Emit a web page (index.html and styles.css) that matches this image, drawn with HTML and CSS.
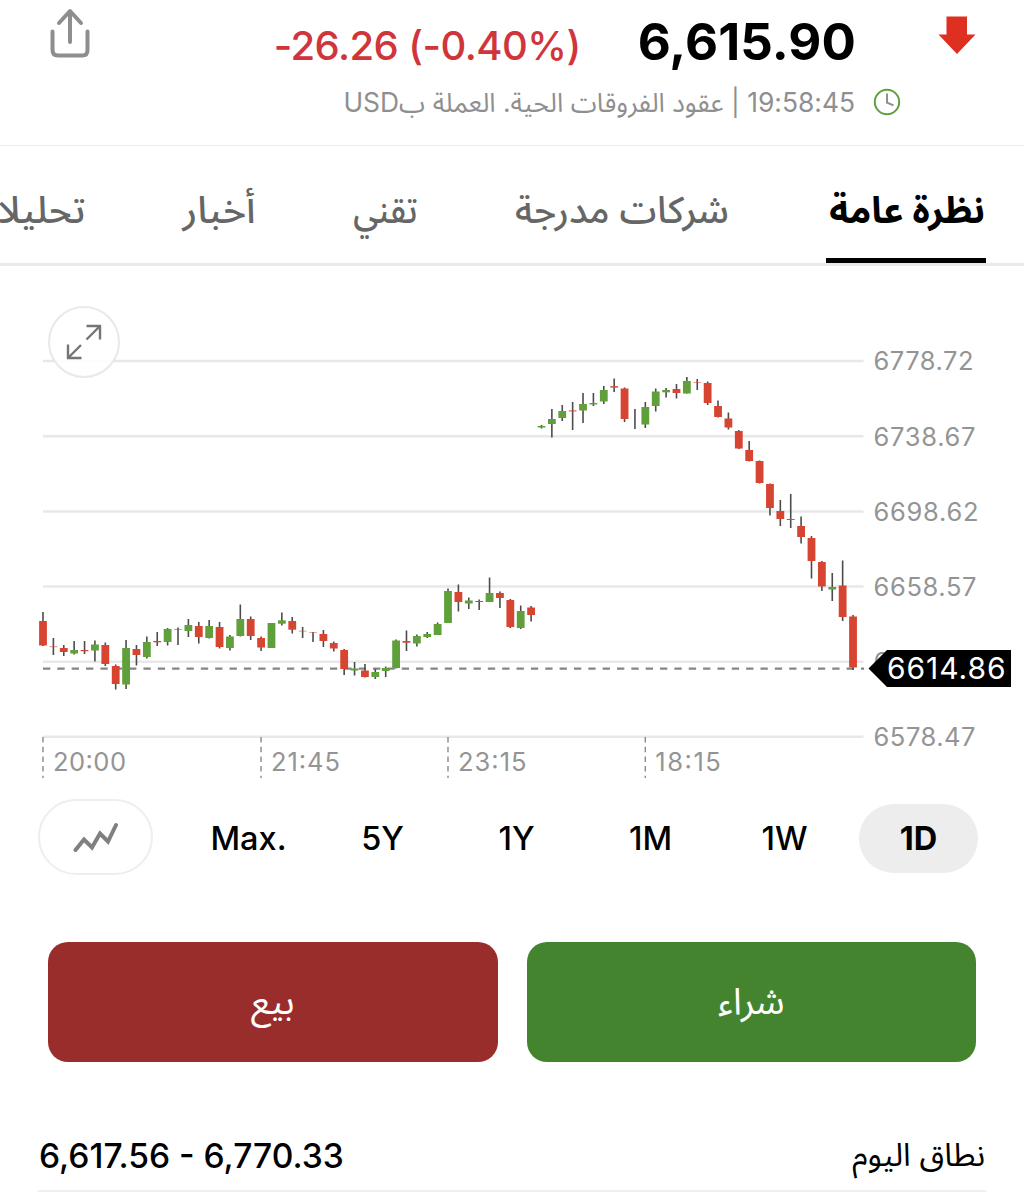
FILE: index.html
```html
<!DOCTYPE html>
<html lang="ar" dir="rtl">
<head>
<meta charset="utf-8">
<title>6,615.90</title>
<link rel="stylesheet" href="styles.css">
</head>
<body>
<header class="quote">
  <svg class="quote-arrow" width="38" height="40" viewBox="0 0 38 40"><path d="M8.500 0.500H29V18.500H37.500L19 38L0.500 18.500H8.500Z" fill="#de2f20"/></svg>
  <div class="quote-body">
    <div class="quote-line">
      <span class="price" dir="ltr">6,615.90</span>
      <span class="change" dir="ltr">-26.26 (-0.40%)</span>
    </div>
    <div class="quote-meta">
      <svg class="clock" width="28" height="28" viewBox="0 0 28 28" fill="none"><circle cx="14" cy="14" r="12.200" stroke="#5f9f3f" stroke-width="2"/><path d="M14 5.500V14.500L20.500 17.300" stroke="#8c8c8c" stroke-width="1.900"/></svg>
      <span class="meta-text"><span class="meta-time">19:58:45</span> | عقود الفروقات الحية. العملة بUSD</span>
    </div>
  </div>
  <svg class="share" width="44" height="54" viewBox="0 0 44 54" fill="none" stroke="#8e8e8e" stroke-width="4" stroke-linecap="round" stroke-linejoin="round"><path d="M22 37V7M11 18L22 6L33 18M4.500 26.500V45Q4.500 50.500 10 50.500H34.500Q39.500 50.500 39.500 45V26.500"/></svg>
</header>
<nav class="tabs">
  <a class="tab tab-active"><span>نظرة عامة</span></a>
  <a class="tab tab-companies"><span>شركات مدرجة</span></a>
  <a class="tab tab-tech"><span>تقني</span></a>
  <a class="tab tab-news"><span>أخبار</span></a>
  <a class="tab tab-analysis"><span>تحليلات</span></a>
</nav>
<section class="chart">
  <svg id="chart" class="chart-canvas" width="1024" height="524" viewBox="0 266 1024 524" direction="ltr"></svg>
  <button class="expand" aria-label="تكبير"><svg width="36" height="36" viewBox="0 0 36 36" fill="none" stroke="#757575" stroke-width="2.400"><path d="M20.500 2H34V15.500M33.500 2.500L20.500 15.500M2 20.500V34H15.500M2.500 33.500L15 21"/></svg></button>
</section>
<div class="ranges">
  <span class="range range-active">1D</span>
  <span class="range">1W</span>
  <span class="range">1M</span>
  <span class="range">1Y</span>
  <span class="range">5Y</span>
  <span class="range range-max" dir="ltr">Max.</span>
  <button class="chart-type" aria-label="نوع الرسم"><svg width="46" height="32" viewBox="0 0 46 32" fill="none" stroke="#808080" stroke-width="4" stroke-linecap="round"><path d="M2.500 29L11 18.500L19 26.500L27 12.500L35 20.500L43 4"/></svg></button>
</div>
<div class="actions">
  <button class="trade buy"><span>شراء</span></button>
  <button class="trade sell"><span>بيع</span></button>
</div>
<dl class="stat">
  <dt>نطاق اليوم</dt>
  <dd dir="ltr">6,617.56 - 6,770.33</dd>
</dl>
<script src="chart.js"></script>
</body>
</html>
```
FILE: styles.css
```css
* { box-sizing: border-box; }
html, body { margin: 0; }
body {
  width: 1024px;
  height: 1200px;
  overflow: hidden;
  background: #fff;
  color: #000;
  font-family: Inter, "Noto Sans Arabic", "Noto Sans", "DejaVu Sans", sans-serif;
}
svg { display: block; }
button { border: 0; padding: 0; font: inherit; background: none; }

.quote {
  height: 146px;
  display: flex;
  align-items: flex-start;
  padding: 0 48px;
  border-bottom: 1px solid #ebebeb;
}
.quote-arrow { margin-top: 16px; }
.quote-body { width: 631px; margin-right: 37px; }
.quote-line {
  height: 84px;
  display: flex;
  align-items: baseline;
  gap: 57px;
  padding: 11px 45px 0 0;
}
.price { font-size: 51px; line-height: 62px; font-weight: 700; letter-spacing: 0.1px; }
.change { font-size: 40px; font-weight: 500; color: #d0353b; letter-spacing: -0.55px; white-space: nowrap; }
.quote-meta { display: flex; align-items: center; gap: 18px; height: 36px; }
.meta-text { font-size: 26.400px; line-height: 36px; color: #8f8f8f; white-space: nowrap; }
.meta-time { letter-spacing: 0.6px; }
.share { margin-top: 5px; margin-right: auto; }

.tabs {
  height: 120px;
  display: flex;
  gap: 97px;
  padding-right: 38px;
  border-bottom: 3px solid #e9e9e9;
  overflow: hidden;
}
.tab {
  flex: none;
  height: 117px;
  padding-top: 36px;
  font-size: 37px;
  line-height: 56px;
  font-weight: 500;
  color: #666;
  white-space: nowrap;
}
.tab span { display: inline-block; transform-origin: right; }
.tab-active { width: 160px; padding-right: 1px; color: #000; font-weight: 700; border-bottom: 5px solid #000; }
.tab-companies { width: 215px; }
.tab-companies span { transform: scaleX(1.01); }
.tab-tech { width: 64px; }
.tab-tech span { transform: scaleX(.9); }
.tab-news { width: 74px; }
.tab-news span { transform: scaleX(1.05); }
.tab-analysis span { transform: scaleX(1.04); }

.chart { position: relative; height: 524px; }
.expand {
  position: absolute;
  left: 48px;
  top: 40px;
  width: 72px;
  height: 72px;
  display: grid;
  place-items: center;
  border: 2px solid #e9e9e9;
  border-radius: 50%;
  background: rgba(255, 255, 255, .85);
}
.grid { stroke: #e8e8e8; stroke-width: 2.4; }
.last-line { stroke: #858585; stroke-width: 2.2; stroke-dasharray: 7.3 7.05; }
.tick { stroke: #8a8a8a; stroke-width: 1.4; stroke-dasharray: 5.5 4.2; }
.axis-label { font-size: 25.500px; fill: #949494; }
.wick { stroke: #4c4c4c; stroke-width: 1.6; }
.up { fill: #5fa03a; }
.down { fill: #d84432; }
.tag-text { font-size: 30px; fill: #fff; }

.ranges {
  height: 96px;
  display: flex;
  align-items: center;
  padding: 0 46px 0 38px;
}
.range {
  width: 119px;
  height: 69px;
  display: grid;
  place-items: center;
  margin-left: 15px;
  border-radius: 34.500px;
  font-size: 32.500px;
  font-weight: 500;
}
.range-active { background: #ededed; font-weight: 700; }
.range-max { margin-left: 36px; }
.chart-type {
  width: 115px;
  height: 76px;
  display: grid;
  place-items: center;
  margin-top: -2px;
  border: 2px solid #eee;
  border-radius: 38px;
}

.actions { display: flex; gap: 29px; padding: 56px 48px 0; height: 176px; }
.trade {
  flex: 1;
  height: 120px;
  border-radius: 20px;
  color: #fff;
  font-size: 37px;
  font-weight: 400;
}
.buy { background: #45842f; }
.sell { background: #992d2c; }

.stat {
  margin: 61px 38px 0;
  height: 69px;
  display: flex;
  align-items: center;
  justify-content: space-between;
  padding: 0 1px 2px 1px;
  border-bottom: 2px solid #efefef;
}
.stat dt { font-size: 32px; }
.stat dd { margin: 0; font-size: 33.600px; font-weight: 500; }
```
FILE: chart.js
```js
const NS = 'http://www.w3.org/2000/svg';
const svg = document.getElementById('chart');

function add(name, attrs, text) {
  const el = document.createElementNS(NS, name);
  for (const key in attrs) el.setAttribute(key, attrs[key]);
  if (text) el.textContent = text;
  svg.appendChild(el);
}

// [direction, high, body top, body bottom, low]; direction n has no body
const candles = [
  ['d',612,621,645.5,646],['f',638,646.2,647.2,655],['d',645,648,652,656],['u',641,650,653.5,654.5],
  ['d',641,650,651.2,654],['u',640.5,644.5,650.5,661.5],['d',642.5,645,664,666],['d',664.5,666,684,689.5],
  ['u',640,648,684.5,689],['d',645,649,655,665.5],['u',636.5,642,657,658.5],['d',632,641,642.3,646],
  ['u',628,629,642,645.5],['f',627.5,629,630,645],['u',619,625,631,637],['d',622,626,637,643.5],
  ['u',620,626,638,638.5],['d',622,627,647,648.5],['u',635,636.5,648,650.5],['u',604.5,619,636,636.5],
  ['d',616.5,619,636,640],['d',636.5,638,647.5,651],['u',623,623,648,648],['u',612.5,620.3,623.7,625.5],
  ['d',617,621,629.7,633.5],['f',627,630.7,631.6,638],['f',632,632,632.8,642],['d',630,634,641,647],
  ['d',641.5,643,648.5,651.5],['d',649,650,669,675],['u',662,668.5,670.5,675.5],['d',664,670.5,677,677.5],
  ['u',669,672,677,679],['u',666.5,668,671,677],['u',639.5,640.5,668,668.5],['d',630.5,641,642.7,651],
  ['u',634.5,636,643.5,646.5],['u',632,634,637,638],['u',622.5,624,635,635],['u',588.5,591,623,623],
  ['d',584.5,592,602,611.5],['u',597.5,600.5,603.5,609],['d',599.5,601,602,610],['u',577.5,593,602,602],
  ['d',591.5,593,598,608],['d',599,600,627,628],['u',605.5,611,628,629],['d',606,607.5,615,621.5],
  ['u',425,426,427.5,428.5],['u',409,419,424,437.5],['u',405,411,418,421],['d',402,410.4,411.4,430],
  ['u',393,404,410.5,423],['u',393,403,404.5,406],['u',386,390,401.5,404],['d',378.5,386.2,387.6,392],
  ['d',387.5,388.5,419,422],['n',409,0,0,429],['u',402,407,424.5,428],['u',388.5,391.5,406,411.5],
  ['u',388,390,392.3,397.5],['d',384,389,393,398.5],['u',377,381,393.5,393.5],['f',379,382.1,383,390],
  ['d',381.5,383,403,405],['d',400.5,406,417,417.5],['d',412.5,418.5,427.5,429.5],['d',430,431,448.5,449],
  ['d',441,450,461,461.5],['d',460.5,461,483,483.5],['d',483.5,484,508,515.5],['d',500,511,519,526],
  ['d',494,519,520,528],['d',516.5,526,537,543.5],['d',536,538,561,578.5],['d',561,562,586.5,591],
  ['u',573,587,589.5,601],['d',560.5,585.5,617,621],['d',615,616.5,667.5,670]
];

const levels = [[361,'6778.72',100],[436.3,'6738.67',102],[511.5,'6698.62',105],[586.5,'6658.57',103],[661.7,'6618.52',102],[736.8,'6578.47',102]];
levels.forEach(([y, label, w]) => {
  add('line', { class: 'grid', x1: 43, x2: 863.5, y1: y, y2: y });
  add('text', { class: 'axis-label', x: 873.5, y: y + 9.2, textLength: w }, label);
});

add('line', { class: 'last-line', x1: 43, x2: 864, y1: 668.6, y2: 668.6 });

[[43,'20:00',73],[261,'21:45',69],[448,'23:15',68.5],[645.3,'18:15',65.5]].forEach(([x, label, w]) => {
  add('line', { class: 'tick', x1: x, x2: x, y1: 737, y2: 778 });
  add('text', { class: 'axis-label', x: x + 10, y: 771, textLength: w }, label);
});

candles.forEach(([dir, high, top, bottom, low], i) => {
  const x = 43 + i * 10.385;
  add('line', { class: 'wick', x1: x, x2: x, y1: high, y2: low });
  if (dir === 'n') return;
  const attrs = { class: dir === 'u' ? 'up' : 'down', x: x - 3.9, y: top, width: 7.8, height: bottom - top };
  if (dir === 'f') attrs.opacity = 0.6;
  add('rect', attrs);
});

// price tag of the last trade
add('path', { d: 'M868.500 668.500L887 650H1011V687H887Z', fill: '#000' });
add('text', { class: 'tag-text', x: 887, y: 679, textLength: 118.5 }, '6614.86');
```
